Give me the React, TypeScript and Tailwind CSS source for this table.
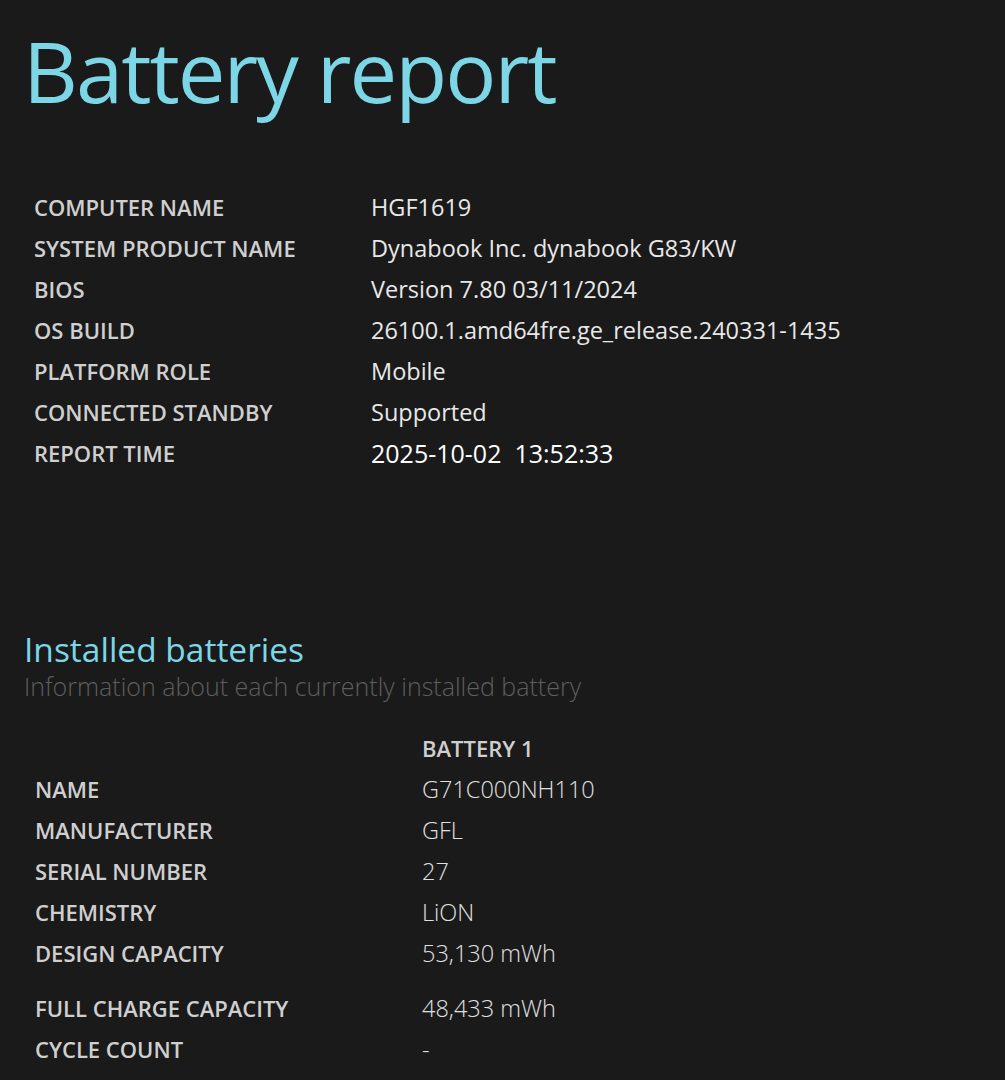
const systemRows: [string, string][] = [
  ['COMPUTER NAME', 'HGF1619'],
  ['SYSTEM PRODUCT NAME', 'Dynabook Inc. dynabook G83/KW'],
  ['BIOS', 'Version 7.80 03/11/2024'],
  ['OS BUILD', '26100.1.amd64fre.ge_release.240331-1435'],
  ['PLATFORM ROLE', 'Mobile'],
  ['CONNECTED STANDBY', 'Supported'],
];

const batteryRows: [string, string][] = [
  ['NAME', 'G71C000NH110'],
  ['MANUFACTURER', 'GFL'],
  ['SERIAL NUMBER', '27'],
  ['CHEMISTRY', 'LiON'],
  ['DESIGN CAPACITY', '53,130 mWh'],
];

export default function App() {
  return (
    <div
      className="min-h-[1080px] w-full bg-[#1a1a1a] overflow-hidden"
      style={{ fontFamily: '"Open Sans", "Noto Sans", sans-serif' }}
    >
      <h1 className="pl-[23px] pt-[20px] text-[85px] leading-[100px] font-normal text-[#7dd6e6] tracking-[-2px]">
        Battery report
      </h1>

      {/* System info */}
      <div className="mt-[67px] pl-[34px]">
        {systemRows.map(([label, value]) => (
          <div key={label} className="flex items-center h-[41px]">
            <div className="w-[337px] text-[22px] font-semibold text-[#cfcfcf]">{label}</div>
            <div className="text-[23.5px] text-[#e8e8e8]">{value}</div>
          </div>
        ))}
        <div className="flex items-center h-[41px]">
          <div className="w-[337px] text-[22px] font-semibold text-[#cfcfcf]">REPORT TIME</div>
          <div className="text-[25px] font-medium text-white whitespace-pre">2025-10-02  13:52:33</div>
        </div>
      </div>

      {/* Installed batteries */}
      <div className="mt-[155px] pl-[24px]">
        <h2 className="text-[33.5px] leading-[40px] text-[#7dd6e6]">Installed batteries</h2>
        <p className="text-[25px] leading-[34px] font-light text-[#5e5e5e]">
          Information about each currently installed battery
        </p>
      </div>

      <div className="mt-[25px] pl-[35px]">
        <div className="flex items-center h-[41px]">
          <div className="w-[387px]" />
          <div className="text-[22px] font-semibold text-[#cfcfcf]">BATTERY 1</div>
        </div>
        {batteryRows.map(([label, value]) => (
          <div key={label} className="flex items-center h-[41px]">
            <div className="w-[387px] text-[22px] font-semibold text-[#cfcfcf]">{label}</div>
            <div className="text-[23.5px] font-light text-[#e0e0e0]">{value}</div>
          </div>
        ))}
        <div className="flex items-center h-[41px] mt-[14px]">
          <div className="w-[387px] text-[22px] font-semibold text-[#cfcfcf]">FULL CHARGE CAPACITY</div>
          <div className="text-[23.5px] font-light text-[#e0e0e0]">48,433 mWh</div>
        </div>
        <div className="flex items-center h-[41px]">
          <div className="w-[387px] text-[22px] font-semibold text-[#cfcfcf]">CYCLE COUNT</div>
          <div className="text-[23.5px] font-light text-[#e0e0e0]">-</div>
        </div>
      </div>
    </div>
  );
}
